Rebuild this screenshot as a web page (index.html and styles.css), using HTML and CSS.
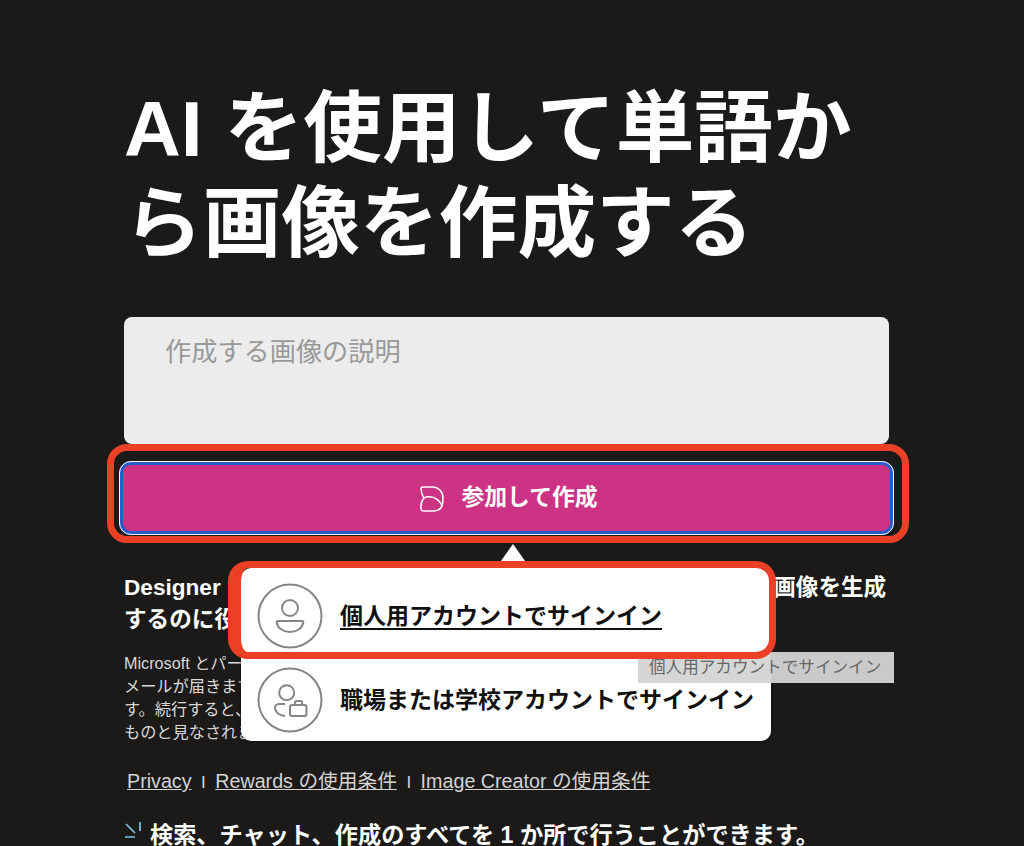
FILE: index.html
```html
<!DOCTYPE html>
<html lang="ja">
<head>
    <meta charset="utf-8">
    <title>Image Creator</title>
    <link rel="stylesheet" href="styles.css">
</head>
<body>
    <div class="main">
        <h1>AI を使用して単語から画像を作成する</h1>

        <div class="prompt">作成する画像の説明</div>

        <button class="join-btn">
            <svg class="logo" width="24" height="26" viewBox="0 0 24 26" fill="none" stroke="#fff" stroke-width="1.5">
                <path d="M2.500 1H12C19 1 23 6 23 12C23 15 23 17 22 19.500C17 10 8 9.500 4 12C2 9.500 1.200 6 1 3C1 1.800 1.500 1 2.500 1Z"/>
                <path d="M4 12C1.500 15 .5 19 1 23C1.200 24.500 2 25 3.500 25H13C18 25 21 23 22 19.500"/>
            </svg>
            <span>参加して作成</span>
        </button>

        <p class="lead">Designer がAI の機能を活用して、ユーザーが入力した言葉から画像を生成<br>するのに役立ちます</p>
        <p class="small">Microsoft とパートナーから最新情報の<br>メールが届きます。いつでも解除できま<br>す。続行すると、利用規約に同意した<br>ものと見なされます。</p>

        <div class="links">
            <a href="#">Privacy</a><span class="sep">I</span><a href="#">Rewards の使用条件</a><span class="sep">I</span><a href="#">Image Creator の使用条件</a>
        </div>

        <div class="bottom-line">
            <svg class="spark" width="16" height="16" viewBox="0 0 16 16" fill="none" stroke="#79c6e4" stroke-width="1.700">
                <path d="M1 2L10 11M15 0V9M0 15H10"/>
            </svg>
            <span>検索、チャット、作成のすべてを 1 か所で行うことができます。</span>
        </div>
    </div>

    <!-- sign in menu -->
    <div class="menu">
        <div class="menu-arrow"></div>
        <a class="menu-item first" href="#">
            <svg width="66" height="66" viewBox="0 0 66 66" fill="none" stroke="#858585" stroke-width="2">
                <circle cx="33" cy="33" r="31.5"/>
                <circle cx="33" cy="25" r="8"/>
                <path d="M21 38H45C46 38 46.500 38.500 46.300 39.500C45.300 45 40 49 33 49C26 49 20.700 45 19.700 39.500C19.500 38.500 20 38 21 38Z"/>
            </svg>
            <span>個人用アカウントでサインイン</span>
        </a>
        <a class="menu-item" href="#">
            <svg width="66" height="66" viewBox="0 0 66 66" fill="none" stroke="#858585" stroke-width="2">
                <circle cx="33" cy="33" r="31.500"/>
                <circle cx="29.700" cy="25.700" r="7.500"/>
                <path d="M28 37H22C19.500 37 18 39 18 41C18 45 22 48.500 28 49"/>
                <rect x="33" y="38" width="16.500" height="11" rx="2"/>
                <path d="M38 38V35.500C38 34.500 38.500 34 39.500 34H43.500C44.500 34 45 34.500 45 35.500V38"/>
            </svg>
            <span>職場または学校アカウントでサインイン</span>
        </a>
    </div>

    <div class="tooltip">個人用アカウントでサインイン</div>

    <!-- red annotation boxes -->
    <div class="mark mark-btn"></div>
    <div class="mark mark-item"></div>
</body>
</html>
```

FILE: styles.css
```css
html, body {
    height: 100%;
}

body {
    margin: 0;
    background-color: #1b1a19;
    color: #fff;
    font-family: "Liberation Sans", "Noto Sans CJK JP", sans-serif;
    overflow: hidden;
    position: relative;
}

a {
    color: inherit;
}

.main {
    width: 765px;
    margin-left: 124px;
    padding-top: 82px;
}

h1 {
    margin: 0 0 45px;
    font-size: 78.700px;
    line-height: 95px;
    font-weight: 700;
}

.prompt {
    height: 127px;
    box-sizing: border-box;
    padding: 18px 41px;
    background-color: #ececec;
    border-radius: 8px;
    color: #999;
    font-size: 26.200px;
    line-height: 34px;
}

.join-btn {
    display: flex;
    align-items: center;
    justify-content: center;
    gap: 17px;
    width: 775px;
    height: 74px;
    margin: 17px 0 0 -5px;
    padding: 0 0 0 5px;
    background-color: #cc3385;
    border: 4px solid #2a5bc8;
    outline: 1.5px solid #fff;
    outline-offset: -1px;
    border-radius: 12px;
    color: #fff;
    font-family: inherit;
    font-size: 22.800px;
    font-weight: 700;
}

.join-btn span {
    margin-top: -6px;
}

.logo {
    margin-top: 2px;
}

.lead {
    margin: 37px 0 0;
    font-size: 22.600px;
    line-height: 32px;
    font-weight: 700;
    white-space: nowrap;
}

.small {
    margin: 16px 0 0;
    font-size: 16.200px;
    line-height: 23px;
    color: #d8d8d8;
}

.links {
    margin: 24px 0 0 3px;
    font-size: 19.700px;
    line-height: 26px;
    color: #d4d4d4;
}

.sep {
    margin: 0 9.500px;
    font-size: 17px;
}

.bottom-line {
    display: flex;
    align-items: center;
    gap: 9px;
    margin-top: 24px;
    font-size: 23.200px;
    font-weight: 700;
    line-height: 30px;
}

.spark {
    margin: 0 0 10px 1px;
}

.menu {
    position: absolute;
    left: 241px;
    top: 568px;
    width: 530px;
    height: 173px;
    background-color: #fff;
    border-radius: 10px;
    box-shadow: 0 1px 3px rgba(0, 0, 0, 0.4);
    color: #111;
}

.menu-arrow {
    position: absolute;
    left: 255px;
    top: -24px;
    width: 0;
    height: 0;
    border-left: 17px solid transparent;
    border-right: 17px solid transparent;
    border-bottom: 24px solid #fff;
}

.menu-item {
    display: flex;
    align-items: center;
    gap: 17px;
    height: 84px;
    padding-left: 16px;
    font-size: 23px;
    font-weight: 700;
    text-decoration: none;
}

.menu-item span {
    margin-top: -4px;
}

.menu-item.first {
    margin-top: 6px;
}

.menu-item.first span {
    text-decoration: underline;
    text-underline-offset: 4px;
}

.tooltip {
    position: absolute;
    left: 638px;
    top: 652px;
    width: 256px;
    height: 31px;
    box-sizing: border-box;
    padding-left: 11px;
    background-color: rgba(212, 212, 212, 0.95);
    color: #666;
    font-size: 16.600px;
    line-height: 31px;
    white-space: nowrap;
}

.mark {
    position: absolute;
    border: 7px solid #eb4026;
    box-sizing: border-box;
    border-radius: 20px;
}

.mark-btn {
    left: 107px;
    top: 444px;
    width: 802px;
    height: 99px;
}

.mark-item {
    left: 228px;
    top: 561px;
    width: 548px;
    height: 98px;
    border-left-width: 13px;
}
```
